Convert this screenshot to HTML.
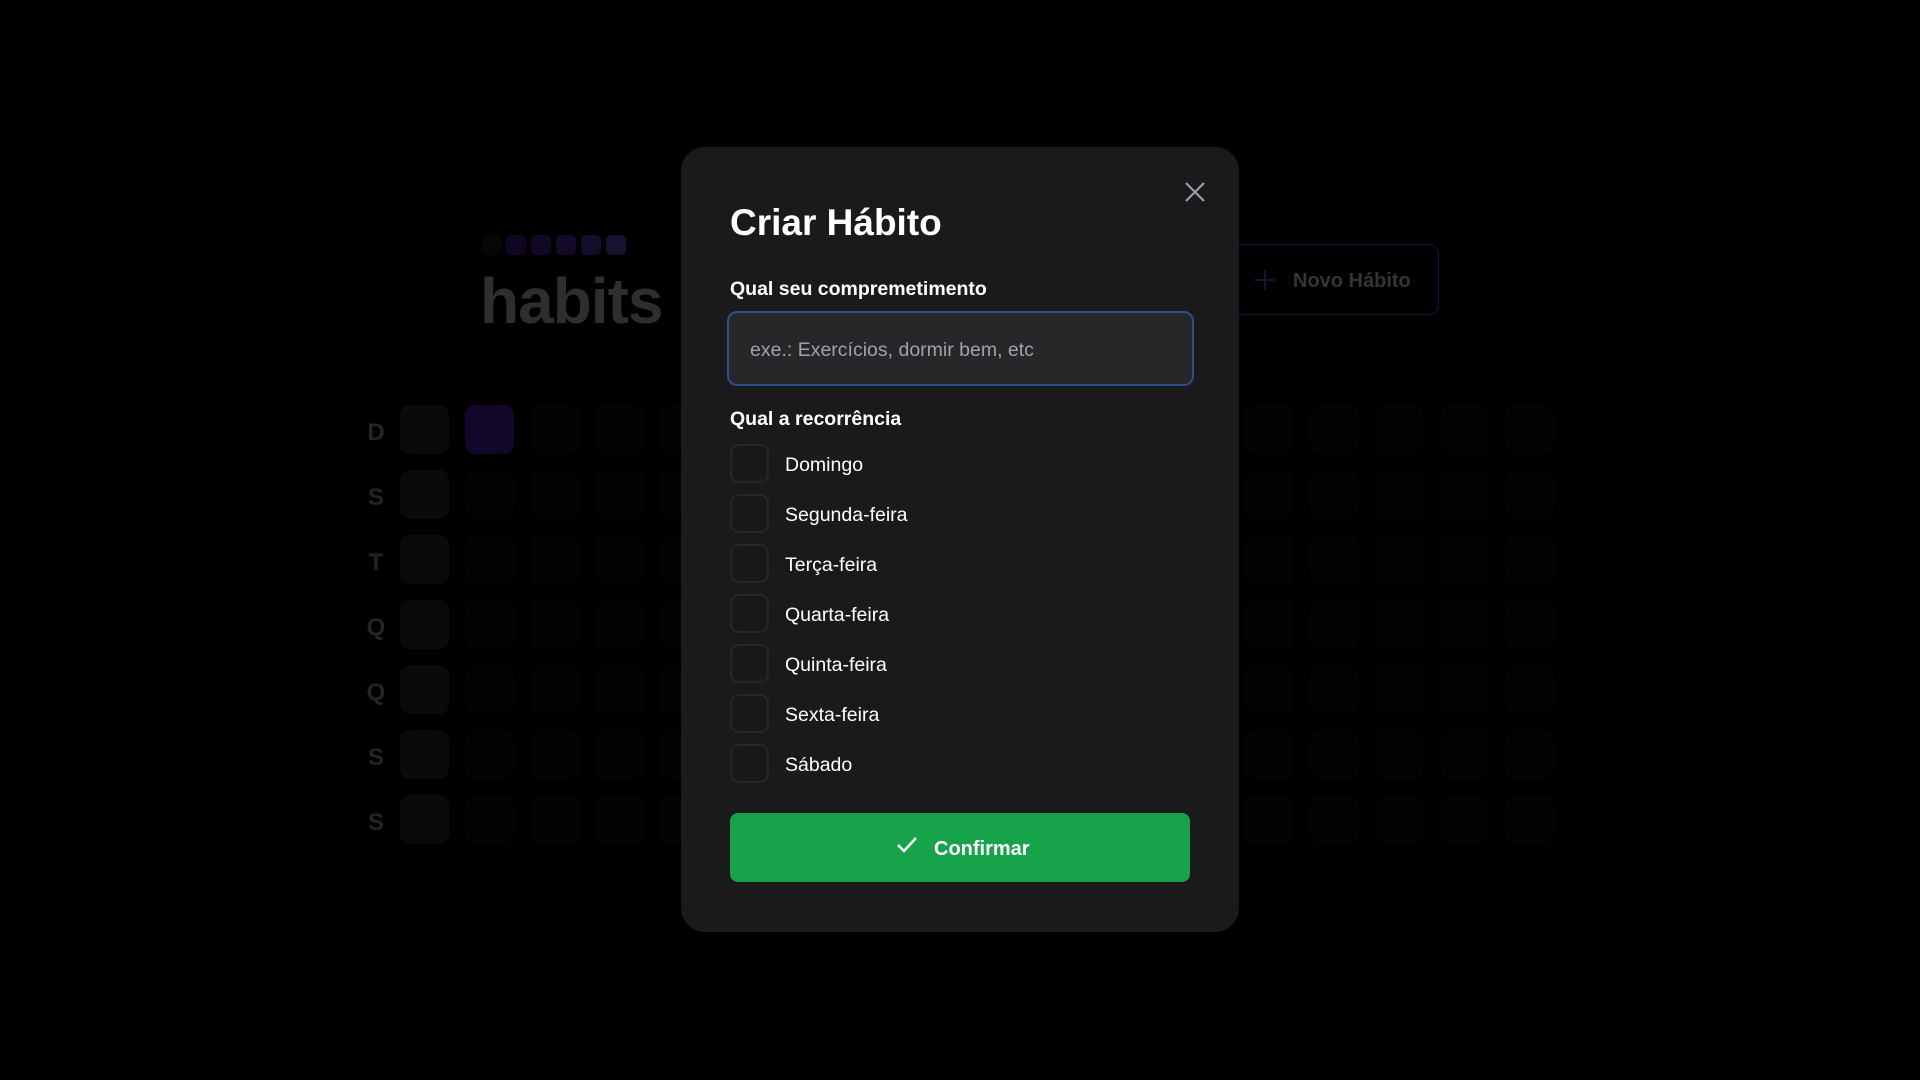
<!DOCTYPE html>
<html><head><meta charset="utf-8"><style>
*{margin:0;padding:0;box-sizing:border-box}
body{width:1920px;height:1080px;background:#000;font-family:"Liberation Sans",sans-serif;position:relative;overflow:hidden}
.abs{position:absolute}
.sq{position:absolute;width:49px;height:49px;border-radius:10px;background:#030303}
.lbl{position:absolute;left:366px;width:20px;text-align:center;color:#242424;font-weight:bold;font-size:24px}
.logo{position:absolute;top:235px;width:20px;height:20px;border-radius:5px}
.modal{position:absolute;left:681px;top:147px;width:558px;height:785px;background:#1a1a1d;border-radius:24px}
.cb{position:absolute;left:49px;width:39px;height:39px;border:2px solid #27272a;border-radius:9px;background:#18181b}
.ct{position:absolute;left:104px;color:#fff;font-size:19.5px}
</style></head><body>
<div class="logo" style="left:481px;background:#060606"></div>
<div class="logo" style="left:506px;background:#0f0722"></div>
<div class="logo" style="left:531px;background:#110825"></div>
<div class="logo" style="left:556px;background:#130a28"></div>
<div class="logo" style="left:581px;background:#150c2c"></div>
<div class="logo" style="left:606px;background:#181130"></div>
<div class="abs" style="left:480px;top:264px;font-size:64px;font-weight:bold;color:#2e2e2e;letter-spacing:-1px">habits</div>
<div class="abs" style="left:1220px;top:244px;width:219px;height:71px;border:1.5px solid #1a1236;border-radius:10px"></div>
<div class="abs" style="left:1255px;top:279px;width:20px;height:2px;background:#1a1236"></div>
<div class="abs" style="left:1264px;top:270px;width:2px;height:20px;background:#1a1236"></div>
<div class="abs" style="left:1293px;top:270px;font-size:20px;font-weight:bold;color:#353535">Novo Hábito</div>
<div id="grid"></div>
<script>
var g=document.getElementById('grid'),h='',L=['D','S','T','Q','Q','S','S'];
for(var r=0;r<7;r++){h+='<div class="lbl" style="top:'+(419+r*65)+'px">'+L[r]+'</div>';
for(var c=0;c<18;c++){var bg=c==0?'#0a0a0a':(c==1&&r==0?'#12072a':'#030303');
h+='<div class="sq" style="left:'+(400+c*65)+'px;top:'+(405+r*65)+'px;background:'+bg+'"></div>';}}
g.innerHTML=h;
</script>
<div class="modal">
<svg class="abs" style="left:503px;top:34px" width="22" height="22" viewBox="0 0 22 22"><path d="M2 2L20 20M20 2L2 20" stroke="#a1a1aa" stroke-width="2"/></svg>
<div class="abs" style="left:49px;top:55px;color:#fff;font-size:37px;font-weight:bold">Criar Hábito</div>
<div class="abs" style="left:49px;top:131px;color:#fff;font-size:19.5px;font-weight:bold">Qual seu compremetimento</div>
<div class="abs" style="left:46px;top:164px;width:467px;height:75px;border:2.5px solid #2c4f8d;border-radius:10px;background:#27272a"></div>
<div class="abs" style="left:69px;top:192px;color:#a1a1aa;font-size:19.5px">exe.: Exercícios, dormir bem, etc</div>
<div class="abs" style="left:49px;top:261px;color:#fff;font-size:19.5px;font-weight:bold">Qual a recorrência</div>
<div class="cb" style="top:297px"></div><div class="ct" style="top:307px">Domingo</div>
<div class="cb" style="top:347px"></div><div class="ct" style="top:357px">Segunda-feira</div>
<div class="cb" style="top:397px"></div><div class="ct" style="top:407px">Terça-feira</div>
<div class="cb" style="top:447px"></div><div class="ct" style="top:457px">Quarta-feira</div>
<div class="cb" style="top:497px"></div><div class="ct" style="top:507px">Quinta-feira</div>
<div class="cb" style="top:547px"></div><div class="ct" style="top:557px">Sexta-feira</div>
<div class="cb" style="top:597px"></div><div class="ct" style="top:607px">Sábado</div>
<div class="abs" style="left:49px;top:666px;width:460px;height:69px;background:#16a34a;border-radius:8px"></div>
<svg class="abs" style="left:215px;top:689px" width="22" height="18" viewBox="0 0 22 18"><path d="M2 9L8 15L20 2" stroke="#fff" stroke-width="2.5" fill="none"/></svg>
<div class="abs" style="left:253px;top:691px;color:#fff;font-size:20px;font-weight:bold">Confirmar</div>
</div>
</body></html>
